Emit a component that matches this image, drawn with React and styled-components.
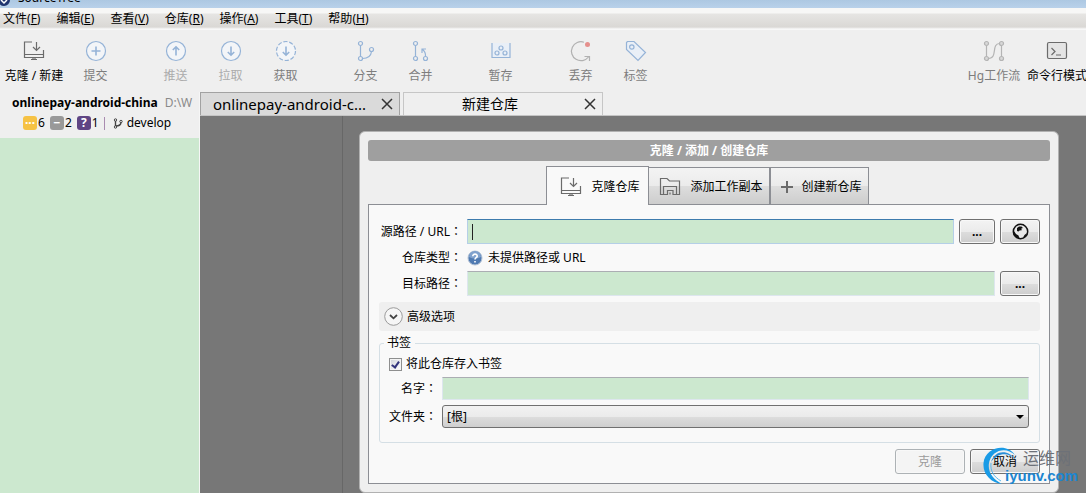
import React, { useState } from "react";
import styled, { createGlobalStyle, css } from "styled-components";

const GlobalStyle = createGlobalStyle`
  * {
    box-sizing: border-box;
  }

  body {
    margin: 0;
    background: #efefef;
    overflow: hidden;
  }

  body, button, input, select {
    font-family: "Noto Sans", "Noto Sans CJK SC", sans-serif;
    font-size: 12px;
    line-height: 16px;
    color: #000;
  }
`;

const Window = styled.div`
  position: relative;
  display: flex;
  flex-direction: column;
  height: 100vh;
  min-height: 480px;
  overflow: hidden;
`;

const TitleBar = styled.header`
  display: flex;
  align-items: flex-end;
  gap: 8px;
  height: 8px;
  padding-bottom: 2px;
  flex-shrink: 0;
  overflow: hidden;
  background: linear-gradient(#adc8e2, #b9d1ea);

  svg,
  span {
    flex-shrink: 0;
  }
`;

const MenuBar = styled.nav`
  display: flex;
  flex-shrink: 0;
  gap: 16px;
  height: 22px;
  padding: 0 3px 1px;
  background: linear-gradient(#f7f7f6 0 5px, #e6e5e3 6px, #dad8d5 19px, #f8f8f8 21px);
`;

const MenuItem = styled.button`
  border: 0;
  padding: 0;
  background: none;
  white-space: nowrap;
`;

const ToolBar = styled.div`
  display: flex;
  flex-shrink: 0;
  gap: 25px;
  height: 62px;
  padding-top: 10px;
`;

const ToolGroup = styled.div`
  display: flex;
  margin-left: ${({ $end }) => ($end ? "auto" : "0")};
`;

const Tool = styled.button`
  display: flex;
  flex-direction: column;
  align-items: center;
  gap: 6px;
  width: ${({ $width }) => $width || 55}px;
  border: 0;
  padding: 0;
  background: none;
  white-space: nowrap;
  color: ${({ $tone }) =>
    ({ active: "#000", faded: "#ababab" }[$tone] || "#7d7d7d")};
`;

const Body = styled.div`
  display: flex;
  flex: 1;
  min-height: 0;
`;

const SideBar = styled.aside`
  display: flex;
  flex-direction: column;
  width: 200px;
  flex-shrink: 0;
  border-right: 1px solid #f6f6f6;
  background: #cce8cf;
`;

const Repo = styled.div`
  height: 46px;
  padding: 2px 0 0 12px;
  overflow: hidden;
  background: #efefef;
  white-space: nowrap;
  line-height: 18px;
  color: #8a8a8a;

  b {
    margin-right: 7px;
    color: #000;
  }
`;

const Status = styled.div`
  display: flex;
  align-items: center;
  gap: 1px;
  height: 22px;
  padding-left: 11px;
  color: #000;

  i {
    margin: 0 7px 0 4px;
    width: 1px;
    height: 13px;
    background: #a98bb0;
  }

  svg {
    margin-right: 2px;
  }
`;

const Badge = styled.span`
  display: flex;
  align-items: center;
  justify-content: center;
  width: 14px;
  height: 14px;
  margin-left: ${({ $first }) => ($first ? 0 : 4)}px;
  border-radius: 3px;
  background: ${({ $color }) => $color};
  color: #fff;
  line-height: 12px;
  font-weight: bold;
`;

const Main = styled.main`
  display: flex;
  flex-direction: column;
  flex: 1;
  min-width: 0;
`;

const TabStrip = styled.div`
  display: flex;
  gap: 3px;
  height: 24px;
  flex-shrink: 0;
  border-bottom: 1px solid #c4c4c4;
`;

const FileTab = styled.div`
  display: flex;
  align-items: center;
  width: 200px;
  padding: 0 6px 0 0;
  border: 1px solid #c6c6c6;
  border-bottom: 0;

  > button {
    flex: 1;
    border: 0;
    padding: 0;
    background: none;
    font-size: 14px;
    line-height: 20px;
    white-space: nowrap;
  }

  > button:last-child {
    display: flex;
    flex: none;
    justify-content: flex-end;
    width: 20px;
  }

  ${({ $dim }) =>
    $dim &&
    css`
      padding-left: 12px;
      background: #dadada;
      border-color: #a2a2a2;

      > button:first-child {
        font-size: 15px;
        text-align: left;
      }
    `}
`;

const Backdrop = styled.div`
  display: flex;
  flex: 1;
  min-height: 0;
  background: #777;
`;

const Drawer = styled.div`
  width: 143px;
  flex-shrink: 0;
  border-right: 1px solid #676767;
`;

const Dialog = styled.section`
  flex: 1;
  align-self: flex-start;
  min-width: 0;
  margin: 15px 27px 0 16px;
  padding: 8px;
  border: 1px solid #b1b1b1;
  border-radius: 6px;
  background: #efefef;
`;

const DialogTitle = styled.h1`
  margin: 0 0 5px;
  border-radius: 3px;
  background: #9f9f9f;
  color: #fff;
  font-size: 12px;
  line-height: 21px;
  text-align: center;
`;

const Tabs = styled.div`
  display: flex;
  justify-content: center;
  align-items: flex-end;
  padding-right: 4px;
`;

const Tab = styled.button`
  display: flex;
  align-items: center;
  justify-content: space-between;
  width: ${({ $width }) => $width}px;
  height: 37px;
  padding: 2px 6px 0 10px;
  border: 1px solid #8c8e94;
  border-left-width: ${({ $last }) => ($last ? 1 : 0)}px;
  border-bottom: 0;
  background: linear-gradient(#f3f3f3, #ebebeb 50%, #dddddd 51%, #cdcdcd);
  white-space: nowrap;

  ${({ $active }) =>
    $active &&
    css`
      position: relative;
      height: 39px;
      margin-bottom: -1px;
      padding: 1px 8px 0 13px;
      border-left-width: 1px;
      background: #f9f9f9;
    `}
`;

const Panel = styled.form`
  padding: 14px 9px 9px 10px;
  border: 1px solid #8c8e94;
  background: #f9f9f9;
`;

const Row = styled.div`
  display: flex;
  align-items: center;
  gap: 5px;
  min-height: ${({ $height }) => $height || 25}px;
  margin-bottom: ${({ $space }) => $space || 0}px;
`;

const Label = styled.label`
  flex-shrink: 0;
  width: ${({ $width }) => $width || 83}px;
  text-align: right;
  white-space: nowrap;
`;

/* The traditional face centres the full-width colon in its cell */
const Colon = styled.span`
  font-family: "Noto Sans CJK TC", sans-serif;
`;

const Note = styled.span`
  display: flex;
  align-items: center;
  gap: 5px;
`;

const TextBox = styled.input`
  flex: 1;
  min-width: 0;
  height: ${({ $short }) => ($short ? 23 : 25)}px;
  padding: 0 4px;
  border: 1px solid #dde6ee;
  border-top-color: #abadb3;
  background: #cce8cf;
  font-size: 14px;
  outline: none;

  &:focus {
    border-color: #b5cfe7;
    border-top-color: #3d7bad;
  }

  ${({ $caret }) =>
    $caret &&
    css`
      caret-color: transparent;
      background: linear-gradient(#222, #222) 4px center / 1px 16px no-repeat
        #cce8cf;
    `}
`;

const Button = styled.button`
  display: flex;
  align-items: center;
  justify-content: center;
  width: ${({ $width }) => $width}px;
  height: 25px;
  padding: 0;
  border: 1px solid #707070;
  border-radius: 3px;
  background: linear-gradient(#f3f3f3, #ebebeb 50%, #dddddd 51%, #cdcdcd);
  box-shadow: inset 0 0 0 1px #f8f8f8;

  &:disabled {
    border-color: #adb2b5;
    background: #f4f4f4;
    color: #9b9b9b;
  }
`;

const Advanced = styled.button`
  display: flex;
  align-items: center;
  gap: 4px;
  width: 100%;
  height: 29px;
  margin-bottom: 4px;
  padding: 0 5px;
  border: 0;
  border-radius: 3px;
  background: #efefef;
`;

const Bookmark = styled.fieldset`
  min-width: 0;
  margin: 0 0 6px;
  padding: 3px 10px 14px 9px;
  border: 1px solid #d5dfe5;
  border-radius: 3px;

  legend {
    padding: 0 4px 0 3px;
    margin-left: -5px;
  }
`;

const CheckLabel = styled.label`
  display: flex;
  align-items: center;
  gap: 4px;
  height: 20px;
  margin-bottom: 3px;
`;

const CheckBox = styled.input`
  appearance: none;
  width: 13px;
  height: 13px;
  margin: 0;
  border: 1px solid #8e8f8f;
  background: linear-gradient(135deg, #cfd3da, #fff);
  box-shadow: inset 0 0 0 1px #f4f4f4;

  &:checked::after {
    content: "";
    display: block;
    width: 5px;
    height: 8px;
    margin: 1px 0 0 3px;
    border: solid #31347c;
    border-width: 0 2px 2px 0;
    transform: rotate(35deg);
    box-sizing: border-box;
  }
`;

const SelectWrap = styled.div`
  position: relative;
  display: flex;
  flex: 1;

  svg {
    position: absolute;
    top: 10px;
    right: 5px;
    pointer-events: none;
  }
`;

const Select = styled.select`
  appearance: none;
  flex: 1;
  height: 23px;
  padding: 0 4px;
  border: 1px solid #707070;
  border-radius: 3px;
  background: linear-gradient(#f2f2f2, #ebebeb 50%, #dddddd 51%, #cfcfcf);
`;

const Actions = styled.div`
  display: flex;
  justify-content: flex-end;
  gap: 5px;
`;

const Watermark = styled.div`
  position: absolute;
  right: 6px;
  bottom: 8px;
  width: 98px;
  height: 39px;
  pointer-events: none;

  svg {
    position: absolute;
    left: 0;
    top: 0;
  }

  span,
  b {
    position: absolute;
    white-space: nowrap;
  }

  span {
    top: 0;
    left: 41px;
    color: #6d7178;
    font-size: 16px;
    line-height: 24px;
  }

  b {
    left: 23px;
    bottom: 0;
    color: #1c86d1;
    font-family: "Liberation Sans", sans-serif;
    font-size: 15px;
    line-height: 18px;
  }
`;

const BLUE = "#95b3d7";

const Icon = ({ size = 22, color = BLUE, children }) => (
  <svg
    width={size}
    height={size}
    viewBox="0 0 22 22"
    fill="none"
    stroke={color}
    strokeWidth="1.2"
    aria-hidden="true"
  >
    {children}
  </svg>
);

const CloneIcon = ({ color = "#6b6b6b" }) => (
  <Icon color={color}>
    <path d="M9 2H1.5V17.5H20.5V10M1.5 14.5H20.5M8 19.5H14M10 17.5V19.5M12 17.5V19.5M13.5 2V10.5M10 7L13.5 10.5L17 7" />
  </Icon>
);

const CircleIcon = ({ dashed, d }) => (
  <Icon>
    <circle
      cx="11"
      cy="11"
      r="9.5"
      fill="#f3f5f8"
      strokeDasharray={dashed ? "4.2 1.77" : undefined}
    />
    <path d={d} strokeWidth="1.6" />
  </Icon>
);

const UP = "M11 15.5V7M7.8 10L11 6.8L14.2 10";
const DOWN = "M11 6.5V15M7.8 12L11 15.2L14.2 12";

const BranchIcon = () => (
  <Icon>
    <circle cx="5.5" cy="3.5" r="2" />
    <circle cx="5.5" cy="18.5" r="2" />
    <circle cx="16.5" cy="9.5" r="2" />
    <path d="M5.5 5.5V16.5M7.5 18.5C13 18.5 16 16 16.5 11.5" />
  </Icon>
);

const MergeIcon = () => (
  <Icon>
    <circle cx="5.5" cy="3.5" r="2" />
    <circle cx="5.5" cy="18.5" r="2" />
    <circle cx="15.5" cy="18.5" r="2" />
    <path d="M5.5 5.5V16.5M15.5 16.5C15.8 13 14.5 11 12.5 9.5M12 13V9H16" />
  </Icon>
);

const StashIcon = () => (
  <Icon>
    <path d="M2 3V17.5H20V3" fill="#e9eff7" />
    <circle cx="11" cy="8" r="2" />
    <circle cx="7" cy="13" r="2" />
    <circle cx="15" cy="13" r="2" />
  </Icon>
);

const DiscardIcon = () => (
  <Icon color="#b1b1b1">
    <path d="M14 2.2A9.5 9.5 0 1 0 18.5 17M14.5 16.5H19.5V21" />
    <circle cx="17.5" cy="4.5" r="2.5" fill="#e58f8c" stroke="none" />
  </Icon>
);

const TagIcon = () => (
  <Icon>
    <path d="M1.5 2.5L2.5 1.5H9L20.5 12.5L13 20.5L1.5 9.5Z" fill="#e9eff7" />
    <circle cx="6.8" cy="7" r="2.2" />
  </Icon>
);

const FlowIcon = () => (
  <Icon color="#b4b4b4">
    <path d="M3.5 5.5V16.5M18.5 5.5V16.5M5.5 18.5C15 18.5 8 3.5 16.5 3.5" />
    <g fill="#d8d8d8">
      <circle cx="3.5" cy="3.5" r="2" />
      <circle cx="3.5" cy="18.5" r="2" />
      <circle cx="18.5" cy="3.5" r="2" />
      <circle cx="18.5" cy="18.5" r="2" />
    </g>
  </Icon>
);

const TerminalIcon = () => (
  <Icon color="#6b6b6b">
    <rect x="1.5" y="2.5" width="19" height="16" rx="1.5" fill="#e4e4e4" />
    <path d="M5.5 8L9 11.5L5.5 15M10 15H15" />
  </Icon>
);

const FolderIcon = () => (
  <Icon color="#6b6b6b">
    <path d="M4.5 18.5H1.5V2.5H8L10.5 5H20.5V18.5H17.5M4.5 18.5V10.5H17.5V18.5H14V14.5H8.5V18.5H4.5M11 18.5V16.5" />
  </Icon>
);

const GlobeIcon = () => (
  <svg width="17" height="17" viewBox="0 0 17 17" aria-hidden="true">
    <circle cx="8.5" cy="8.5" r="7.2" fill="#e8e8e8" stroke="#111" strokeWidth="1.5" />
    <path
      d="M5 5L7 3.5L9.5 3.5L11 5L9.3 5.6L9.8 7.2L7.6 7.4L6.5 8.6L5 8Z"
      fill="#111"
    />
    <path
      d="M2 8L4 11L6.5 12.5L7.5 15.5L4 14L1.5 11ZM12.5 12L15 10L13.5 13.5L10.8 15Z"
      fill="#111"
    />
  </svg>
);

const HelpIcon = () => (
  <svg width="16" height="16" viewBox="0 0 16 16" aria-hidden="true">
    <circle cx="8" cy="8" r="7" fill="#4f7ab1" stroke="#b5c3d6" />
    <path d="M2 7A6 6 0 0 1 14 7Q8 10 2 7Z" fill="#7fa1cd" />
    <path
      d="M5.8 6.2C5.8 3.3 10.3 3.5 10.2 6.1C10.1 7.8 8 7.7 8 9.5M8 11V12.5"
      fill="none"
      stroke="#fff"
      strokeWidth="1.6"
    />
  </svg>
);

const CloseIcon = () => (
  <svg width="12" height="12" viewBox="0 0 12 12" aria-hidden="true">
    <path d="M1 1L11 11M11 1L1 11" stroke="#333" strokeWidth="1.5" />
  </svg>
);

const menus = [
  ["文件", "F"],
  ["编辑", "E"],
  ["查看", "V"],
  ["仓库", "R"],
  ["操作", "A"],
  ["工具", "T"],
  ["帮助", "H"]
];

const toolGroups = [
  [
    { label: "克隆 / 新建", icon: <CloneIcon />, width: 68, tone: "active" },
    { label: "提交", icon: <CircleIcon d="M11 6.5V15.5M6.5 11H15.5" /> }
  ],
  [
    { label: "推送", icon: <CircleIcon d={UP} />, tone: "faded" },
    { label: "拉取", icon: <CircleIcon d={DOWN} />, tone: "faded" },
    { label: "获取", icon: <CircleIcon d={DOWN} dashed /> }
  ],
  [
    { label: "分支", icon: <BranchIcon /> },
    { label: "合并", icon: <MergeIcon /> }
  ],
  [{ label: "暂存", icon: <StashIcon /> }],
  [
    { label: "丢弃", icon: <DiscardIcon /> },
    { label: "标签", icon: <TagIcon /> }
  ],
  [
    { label: "Hg工作流", icon: <FlowIcon />, width: 68 },
    { label: "命令行模式", icon: <TerminalIcon />, width: 58, tone: "active" }
  ]
];

export default function App() {
  const [url, setUrl] = useState("");
  const [saved, setSaved] = useState(true);

  return (
    <Window>
      <GlobalStyle />
      <TitleBar>
        <svg width="10" height="10" viewBox="0 0 10 10" aria-hidden="true">
          <circle cx="4" cy="4" r="6" fill="#20356f" />
          <path d="M1 4L4 7L7 4" stroke="#fff" strokeWidth="1.5" fill="none" />
        </svg>
        <span>SourceTree</span>
      </TitleBar>
      <MenuBar>
        {menus.map(([name, key]) => (
          <MenuItem key={key}>
            {name}(<u>{key}</u>)
          </MenuItem>
        ))}
      </MenuBar>
      <ToolBar>
        {toolGroups.map((tools, i) => (
          <ToolGroup key={i} $end={i === toolGroups.length - 1}>
            {tools.map(({ label, icon, width, tone }) => (
              <Tool key={label} $width={width} $tone={tone}>
                {icon}
                <span>{label}</span>
              </Tool>
            ))}
          </ToolGroup>
        ))}
      </ToolBar>
      <Body>
        <SideBar>
          <Repo>
            <b>onlinepay-android-china</b>D:\W
            <Status>
              <Badge $first $color="#f6c244">···</Badge>6
              <Badge $color="#999">−</Badge>2
              <Badge $color="#5f4584">?</Badge>1
              <i />
              <svg width="11" height="11" viewBox="0 0 11 11" fill="none" stroke="#444">
                <circle cx="2.5" cy="2" r="1.2" />
                <circle cx="2.5" cy="9" r="1.2" />
                <circle cx="8" cy="3.5" r="1.2" />
                <path d="M2.5 3V8M3 8C6 8 7.5 7 8 5" strokeWidth="1.4" />
              </svg>
              <span>develop</span>
            </Status>
          </Repo>
        </SideBar>
        <Main>
          <TabStrip>
            <FileTab $dim>
              <button>onlinepay-android-c...</button>
              <button aria-label="关闭">
                <CloseIcon />
              </button>
            </FileTab>
            <FileTab>
              <button>新建仓库</button>
              <button aria-label="关闭">
                <CloseIcon />
              </button>
            </FileTab>
          </TabStrip>
          <Backdrop>
            <Drawer />
            <Dialog>
              <DialogTitle>克隆 / 添加 / 创建仓库</DialogTitle>
              <Tabs>
                <Tab $active $width={103}>
                  <CloneIcon />
                  克隆仓库
                </Tab>
                <Tab $width={121}>
                  <FolderIcon />
                  添加工作副本
                </Tab>
                <Tab $last $width={99}>
                  <svg width="12" height="12" viewBox="0 0 12 12" aria-hidden="true">
                    <path d="M6 0V12M0 6H12" stroke="#6b6b6b" strokeWidth="2" />
                  </svg>
                  创建新仓库
                </Tab>
              </Tabs>
              <Panel onSubmit={e => e.preventDefault()}>
                <Row $space={1}>
                  <Label htmlFor="url">
                    源路径 / URL<Colon>：</Colon>
                  </Label>
                  <TextBox
                    id="url"
                    autoFocus
                    $caret={!url}
                    value={url}
                    onChange={e => setUrl(e.target.value)}
                  />
                  <Button type="button" $width={36}>
                    <b>...</b>
                  </Button>
                  <Button type="button" $width={40} aria-label="URL">
                    <GlobeIcon />
                  </Button>
                </Row>
                <Row $space={1}>
                  <Label as="span">
                    仓库类型<Colon>：</Colon>
                  </Label>
                  <Note>
                    <HelpIcon />
                    未提供路径或 URL
                  </Note>
                </Row>
                <Row $space={6}>
                  <Label htmlFor="target">
                    目标路径<Colon>：</Colon>
                  </Label>
                  <TextBox id="target" />
                  <Button type="button" $width={40}>
                    <b>...</b>
                  </Button>
                </Row>
                <Advanced type="button">
                  <svg width="19" height="19" viewBox="0 0 19 19" fill="none" aria-hidden="true">
                    <circle cx="9.5" cy="9.5" r="8.8" fill="#f6f6f6" stroke="#9b9b9b" />
                    <path d="M6 8L9.5 11.3L13 8" stroke="#444" strokeWidth="1.8" />
                  </svg>
                  高级选项
                </Advanced>
                <Bookmark>
                  <legend>书签</legend>
                  <CheckLabel>
                    <CheckBox
                      type="checkbox"
                      checked={saved}
                      onChange={e => setSaved(e.target.checked)}
                    />
                    将此仓库存入书签
                  </CheckLabel>
                  <Row $height={23} $space={5}>
                    <Label htmlFor="name" $width={48}>
                      名字<Colon>：</Colon>
                    </Label>
                    <TextBox id="name" $short />
                  </Row>
                  <Row $height={23}>
                    <Label htmlFor="folder" $width={48}>
                      文件夹<Colon>：</Colon>
                    </Label>
                    <SelectWrap>
                      <Select id="folder">
                        <option>[根]</option>
                      </Select>
                      <svg width="8" height="4" viewBox="0 0 8 4" aria-hidden="true">
                        <path d="M0 0H8L4 4Z" fill="#000" />
                      </svg>
                    </SelectWrap>
                  </Row>
                </Bookmark>
                <Actions>
                  <Button disabled $width={70}>
                    克隆
                  </Button>
                  <Button type="button" $width={70}>
                    取消
                  </Button>
                </Actions>
              </Panel>
            </Dialog>
          </Backdrop>
        </Main>
      </Body>
      <Watermark>
        <svg width="38" height="39" viewBox="0 0 38 39" fill="none" aria-hidden="true">
          <path
            d="M33 9C24 -4 3 2 1.5 17C0.5 28 9 37 20 38C11 33 5.5 26 7 17C9.5 4 24 0 33 9Z"
            fill="#1a9be6"
          />
          <path d="M9 16C13 4 26 3 34 14C27 6 16 6 9 16Z" fill="#2a8fd8" />
          <path d="M9 17C8 25 12 31 19 35" stroke="#5db9ee" />
        </svg>
        <span>运维网</span>
        <b>iyunv.com</b>
      </Watermark>
    </Window>
  );
}
